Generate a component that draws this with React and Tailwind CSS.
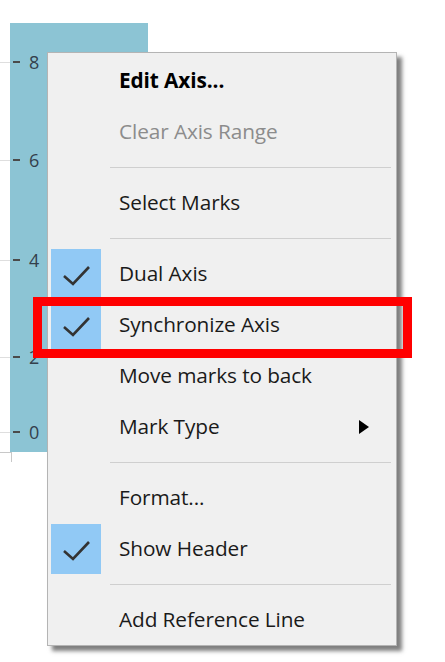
import React from 'react';

const ticks = [
    { label: '8', top: 'mt-[30px]' },
    { label: '6', top: 'mt-[80px]' },
    { label: '4', top: 'mt-[82px]' },
    { label: '2', top: 'mt-[79px]' },
    { label: '0', top: 'mt-[57px]' },
];

const menu = [
    { label: 'Edit Axis...', bold: true },
    { label: 'Clear Axis Range', disabled: true },
    { sep: true },
    { label: 'Select Marks' },
    { sep: true },
    { label: 'Dual Axis', checked: true },
    { label: 'Synchronize Axis', checked: true },
    { label: 'Move marks to back' },
    { label: 'Mark Type', submenu: true },
    { sep: true },
    { label: 'Format...' },
    { label: 'Show Header', checked: true },
    { sep: true },
    { label: 'Add Reference Line' },
];

function Check() {
    return (
        <svg width="50" height="51" viewBox="0 0 50 51">
            <polyline points="13,27 22,35 38,18" fill="none" stroke="#333" strokeWidth="2.6" />
        </svg>
    );
}

function MenuItem({ item }) {
    if (item.sep) {
        return (
            <div className="h-[20px] flex items-center pl-[62px] pr-[5px]">
                <div className="h-px w-full bg-[#cfcfcf]" />
            </div>
        );
    }
    return (
        <div className="h-[51px] flex items-center">
            <div className={`ml-[3px] w-[50px] h-[50px] shrink-0 ${item.checked ? 'bg-[#91c9f5]' : ''}`}>
                {item.checked && <Check />}
            </div>
            <span
                className={`pl-[18px] text-[20.8px] tracking-[-0.1px] ${item.bold ? 'font-bold text-black' : ''} ${item.disabled ? 'text-[#8c8c8c]' : 'text-[#1a1a1a]'}`}
            >
                {item.label}
            </span>
            {item.submenu && (
                <svg className="ml-auto mr-[27px]" width="10" height="14" viewBox="0 0 10 14">
                    <polygon points="0,0 10,7 0,14" fill="#000" />
                </svg>
            )}
        </div>
    );
}

export default function App() {
    return (
        <div className="relative w-[445px] h-[662px] bg-white overflow-hidden" style={{ fontFamily: '"Open Sans", "Noto Sans", sans-serif' }}>
            {/* axis strip */}
            <div className="ml-[10px] mt-[23px] w-[138px] h-[429px] bg-[#8cc4d4] flex flex-col">
                {ticks.map((t) => (
                    <div key={t.label} className={`${t.top} -ml-[10px] h-[18px] flex items-center`}>
                        <div className="w-[10px] h-px bg-[#dedede]" />
                        <div className="ml-[3px] w-[7px] h-[2px] bg-[#4a4a4a]" />
                        <span className="ml-[9px] text-[18px] leading-none text-[#34404c]">{t.label}</span>
                    </div>
                ))}
            </div>
            <div className="flex">
                <div className="w-[11px] h-px bg-[#c8c8c8]" />
                <div className="w-px h-[10px] bg-[#c8c8c8]" />
            </div>

            {/* context menu */}
            <div className="absolute left-[47px] top-[52px] w-[350px] bg-[#f0f0f0] border border-[#b4b4b4] pt-[2px] shadow-[5px_5px_4px_rgba(0,0,0,0.5)]">
                {menu.map((item, i) => (
                    <MenuItem key={i} item={item} />
                ))}
            </div>

            {/* highlight annotation */}
            <div className="absolute left-[33px] top-[297px] w-[379px] h-[61px] border-[9px] border-[#ff0000]" />
        </div>
    );
}
